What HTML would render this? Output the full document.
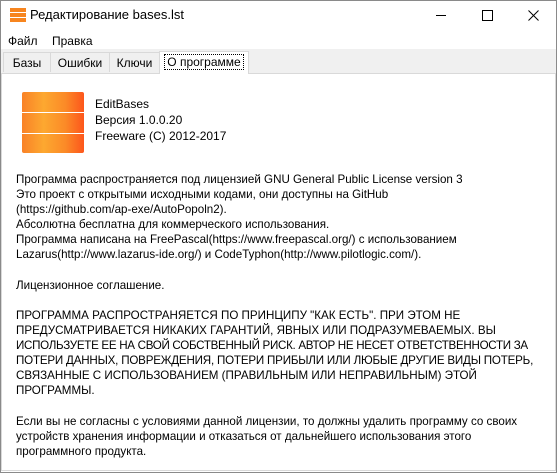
<html><head><style>
body{margin:0;width:557px;height:473px;position:relative;background:#fff;font-family:"Liberation Sans",sans-serif;font-size:12px;color:#000;overflow:hidden}
.a{position:absolute}
.tab{position:absolute;top:52px;height:20px;background:#f0f0f0;border:1px solid #d9d9d9;border-bottom:none;line-height:20px;text-align:center;box-sizing:border-box}
.t div{height:15.1px;line-height:15.1px;white-space:nowrap}
</style></head><body>
<div class="a" style="left:0;top:0;width:555px;height:471px;border:1px solid #8a8a8a"></div>
<div class="a" style="left:10px;top:8px;width:16px;height:4px;background:#f7851f"></div>
<div class="a" style="left:10px;top:13px;width:16px;height:4px;background:#f7851f"></div>
<div class="a" style="left:10px;top:18px;width:16px;height:4px;background:#f7851f"></div>
<div class="a" style="left:30px;top:7px;font-size:13px">Редактирование bases.lst</div>
<div class="a" style="left:436px;top:15px;width:10px;height:1px;background:#000"></div>
<div class="a" style="left:482px;top:10px;width:9px;height:9px;border:1px solid #000"></div>
<svg class="a" style="left:528px;top:10px" width="11" height="11"><path d="M0.5 0.5L10.5 10.5M10.5 0.5L0.5 10.5" stroke="#000" stroke-width="1"/></svg>
<div class="a" style="left:8px;top:34px">Файл</div>
<div class="a" style="left:52px;top:34px">Правка</div>
<div class="a" style="left:1px;top:49px;width:555px;height:24px;background:#f0f0f0"></div>
<div class="tab" style="left:3px;width:48px">Базы</div>
<div class="tab" style="left:50px;width:60px">Ошибки</div>
<div class="tab" style="left:109px;width:51px">Ключи</div>
<div class="tab" style="left:159px;top:51px;height:23px;width:90px;background:#fff;z-index:2"><span style="outline:1px dotted #000;padding:0 2px">О программе</span></div>
<div class="a" style="left:1px;top:73px;width:553px;height:396px;background:#fff;border:1px solid #d9d9d9"></div>
<div class="a" style="left:22px;top:92px;width:62px;height:61px;border-radius:2px;background:linear-gradient(90deg,#f98227,#fda830 35%,#fb8a27 70%,#fd561c)"></div>
<div class="a" style="left:22px;top:112px;width:62px;height:1px;background:#fff"></div>
<div class="a" style="left:22px;top:133px;width:62px;height:1px;background:#fff"></div>
<div class="a" style="left:95px;top:97px;line-height:15.8px">EditBases<br>Версия 1.0.0.20<br>Freeware (C) 2012-2017</div>
<div class="a t" style="left:16px;top:172px;font-size:11.6px">
<div>Программа распространяется под лицензией GNU General Public License version 3</div>
<div>Это проект с открытыми исходными кодами, они доступны на GitHub</div>
<div>(https://github.com/ap-exe/AutoPopoln2).</div>
<div>Абсолютна бесплатна для коммерческого использования.</div>
<div>Программа написана на FreePascal(https://www.freepascal.org/) с использованием</div>
<div>Lazarus(http://www.lazarus-ide.org/) и CodeTyphon(http://www.pilotlogic.com/).</div>
<div></div>
<div>Лицензионное соглашение.</div>
<div></div>
<div>ПРОГРАММА РАСПРОСТРАНЯЕТСЯ ПО ПРИНЦИПУ "КАК ЕСТЬ". ПРИ ЭТОМ НЕ</div>
<div>ПРЕДУСМАТРИВАЕТСЯ НИКАКИХ ГАРАНТИЙ, ЯВНЫХ ИЛИ ПОДРАЗУМЕВАЕМЫХ. ВЫ</div>
<div style="letter-spacing:-0.3px">ИСПОЛЬЗУЕТЕ ЕЕ НА СВОЙ СОБСТВЕННЫЙ РИСК. АВТОР НЕ НЕСЕТ ОТВЕТСТВЕННОСТИ ЗА</div>
<div style="letter-spacing:-0.2px">ПОТЕРИ ДАННЫХ, ПОВРЕЖДЕНИЯ, ПОТЕРИ ПРИБЫЛИ ИЛИ ЛЮБЫЕ ДРУГИЕ ВИДЫ ПОТЕРЬ,</div>
<div>СВЯЗАННЫЕ С ИСПОЛЬЗОВАНИЕМ (ПРАВИЛЬНЫМ ИЛИ НЕПРАВИЛЬНЫМ) ЭТОЙ</div>
<div>ПРОГРАММЫ.</div>
<div></div>
<div>Если вы не согласны с условиями данной лицензии, то должны удалить программу со своих</div>
<div>устройств хранения информации и отказаться от дальнейшего использования этого</div>
<div>программного продукта.</div>
</div>
</body></html>
